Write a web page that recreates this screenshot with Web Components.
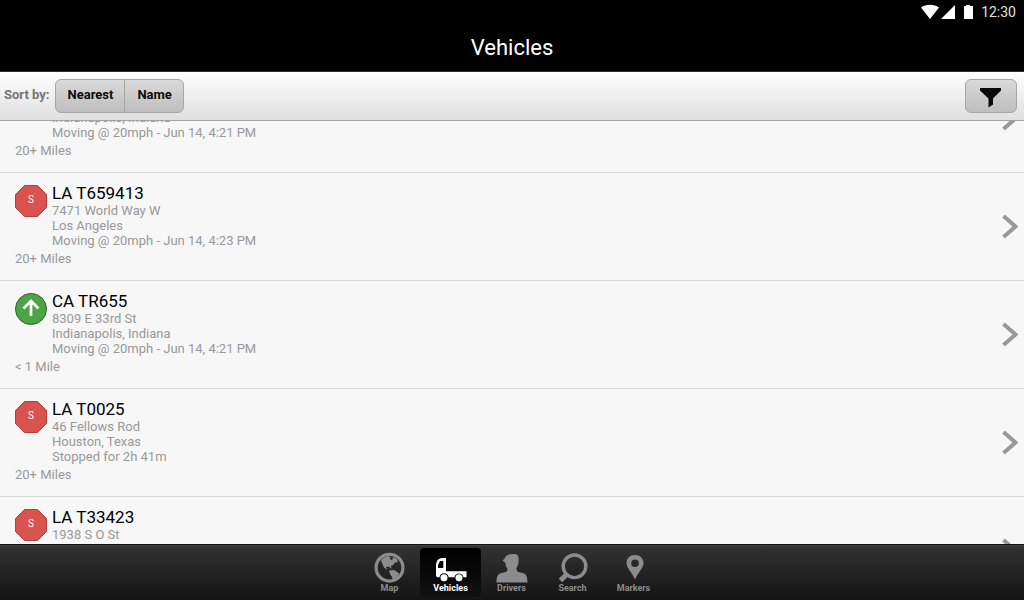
<!DOCTYPE html>
<html lang="en">
<head>
<meta charset="utf-8">
<meta name="viewport" content="width=device-width, initial-scale=1">
<title>Vehicles</title>
<style>
    html, body {
        height: 100%;
        margin: 0;
    }
    body {
        font-family: Roboto, "Liberation Sans", sans-serif;
        background: #000;
    }
</style>
</head>
<body>

<app-screen>
    <status-bar slot="top" time="12:30"></status-bar>
    <title-bar slot="top">Vehicles</title-bar>
    <sort-bar slot="top" label="Sort by:">
        <sort-button slot="options">Nearest</sort-button>
        <sort-button slot="options">Name</sort-button>
    </sort-bar>

    <vehicle-list offset="56">
        <vehicle-row city="Indianapolis, Indiana" status="Moving @ 20mph - Jun 14, 4:21 PM" distance="20+ Miles" state="moving"></vehicle-row>
        <vehicle-row name="LA T659413" street="7471 World Way W" city="Los Angeles" status="Moving @ 20mph - Jun 14, 4:23 PM" distance="20+ Miles" state="stopped"></vehicle-row>
        <vehicle-row name="CA TR655" street="8309 E 33rd St" city="Indianapolis, Indiana" status="Moving @ 20mph - Jun 14, 4:21 PM" distance="&lt; 1 Mile" state="moving"></vehicle-row>
        <vehicle-row name="LA T0025" street="46 Fellows Rod" city="Houston, Texas" status="Stopped for 2h 41m" distance="20+ Miles" state="stopped"></vehicle-row>
        <vehicle-row name="LA T33423" street="1938 S O St" state="stopped"></vehicle-row>
    </vehicle-list>

    <tab-bar slot="bottom">
        <tab-item icon="map">Map</tab-item>
        <tab-item icon="vehicles" active>Vehicles</tab-item>
        <tab-item icon="drivers">Drivers</tab-item>
        <tab-item icon="search">Search</tab-item>
        <tab-item icon="markers">Markers</tab-item>
    </tab-bar>
</app-screen>

<script>
// attaches an open shadow root with the given markup
function render(host, html) {
    const template = document.createElement('template')
    template.innerHTML = html
    host.attachShadow({ mode: 'open' }).appendChild(template.content.cloneNode(true))
    return host.shadowRoot
}

class AppScreen extends HTMLElement {
    constructor() {
        super()
        render(this, `
            <style>
                :host {
                    display: flex;
                    flex-direction: column;
                    height: 100vh;
                }
                main {
                    flex: 1;
                    min-height: 0;
                    display: flex;
                    flex-direction: column;
                }
            </style>
            <slot name="top"></slot>
            <main><slot></slot></main>
            <slot name="bottom"></slot>
        `)
    }
}

class StatusBar extends HTMLElement {
    constructor() {
        super()
        const root = render(this, `
            <style>
                :host {
                    display: flex;
                    justify-content: flex-end;
                    align-items: center;
                    height: 24px;
                    padding-right: 8px;
                    background: #000;
                    color: #e0e0e0;
                    font-size: 14px;
                }
                svg {
                    display: block;
                    fill: #fff;
                    margin-right: 8px;
                }
            </style>
            <svg width="52" height="16" viewBox="0 0 52 16" aria-hidden="true">
                <path d="M0 3.5C5-.2 13-.2 18 3.5L9 15Z"/>
                <path d="M34 1V15H20Z"/>
                <path d="M43 2h2V1h4v1h3v13h-9Z"/>
            </svg>
            <time></time>
        `)
        root.querySelector('time').textContent = this.getAttribute('time')
    }
}

class TitleBar extends HTMLElement {
    constructor() {
        super()
        render(this, `
            <style>
                :host {
                    display: block;
                    background: #000;
                    border-bottom: 1px solid #1b3446;
                }
                h1 {
                    margin: 0;
                    color: #fff;
                    font-size: 22px;
                    font-weight: 400;
                    line-height: 47px;
                    text-align: center;
                }
            </style>
            <h1><slot></slot></h1>
        `)
    }
}

class SortButton extends HTMLElement {
    constructor() {
        super()
        render(this, `
            <style>
                :host {
                    display: block;
                }
                :host(:not(:first-child)) {
                    border-left: 1px solid #a6a6a6;
                }
                button {
                    height: 32px;
                    margin: 0;
                    padding: 0 11px 4px 12px;
                    border: 0;
                    background: none;
                    color: #0a0a0a;
                    font: bold 13px Roboto, "Liberation Sans", sans-serif;
                    cursor: pointer;
                }
            </style>
            <button type="button"><slot></slot></button>
        `)
    }
}

class SortBar extends HTMLElement {
    constructor() {
        super()
        const root = render(this, `
            <style>
                :host {
                    display: flex;
                    align-items: center;
                    gap: 5px;
                    height: 48px;
                    padding: 0 7px 0 4px;
                    background: linear-gradient(#fff, #dfdfdf);
                    border-bottom: 1px solid #a4a4a4;
                }
                #label {
                    color: #757575;
                    font-size: 13px;
                    font-weight: bold;
                    padding-bottom: 4px;
                }
                .group, .filter {
                    box-sizing: border-box;
                    height: 34px;
                    border: 1px solid #a6a6a6;
                    border-radius: 6px;
                    background: linear-gradient(#d9d9d9, #bebebe);
                }
                .group {
                    display: flex;
                }
                .filter {
                    display: flex;
                    align-items: center;
                    justify-content: center;
                    width: 52px;
                    margin-left: auto;
                    padding: 4px 0 0;
                    cursor: pointer;
                }
            </style>
            <span id="label"></span>
            <div class="group" role="group" aria-labelledby="label"><slot name="options"></slot></div>
            <button class="filter" type="button" aria-label="Filter">
                <svg width="22" height="20" viewBox="0 0 22 20" aria-hidden="true">
                    <path d="M0 0H21V2.5L13 10.5V16.5L8.5 19.5V10.5L0 2.5Z" fill="#0a0a0a"/>
                </svg>
            </button>
        `)
        root.querySelector('#label').textContent = this.getAttribute('label')
    }
}

class VehicleList extends HTMLElement {
    constructor() {
        super()
        render(this, `
            <style>
                :host {
                    display: block;
                    flex: 1;
                    min-height: 0;
                    overflow-y: auto;
                    scrollbar-width: none;
                    background: #f7f7f7;
                }
            </style>
            <div role="list"><slot></slot></div>
        `)
    }
    connectedCallback() {
        this.scrollTop = Number(this.getAttribute('offset'))
    }
}

const badges = {
    stopped: `
        <path d="M9.5.5H22.5L31.5 9.5V22.5L22.5 31.5H9.5L.5 22.5V9.5Z" fill="#d9534f" stroke="#b83c38"/>
        <text x="16" y="18" fill="#fff" font-size="10" text-anchor="middle">S</text>`,
    moving: `
        <circle cx="16" cy="16" r="15.5" fill="#4ca446" stroke="#2c6329"/>
        <path d="M16 23V9M8.5 15.5L16 8L23.5 15.5" fill="none" stroke="#fff" stroke-width="2.7"/>`
}

class VehicleRow extends HTMLElement {
    constructor() {
        super()
        const root = render(this, `
            <style>
                :host {
                    display: block;
                    border-bottom: 1px solid #d9d9d9;
                }
                a {
                    display: flex;
                    align-items: center;
                    justify-content: space-between;
                    padding: 12px 6px 14px 15px;
                    color: #999;
                    font-size: 13px;
                    line-height: 15px;
                    text-decoration: none;
                }
                .info {
                    display: grid;
                    grid-template-columns: 32px auto;
                    column-gap: 5px;
                }
                svg {
                    display: block;
                }
                h2 {
                    margin: 0;
                    min-height: 16px;
                    padding-bottom: 2px;
                    color: #000;
                    font-size: 17px;
                    font-weight: 400;
                    line-height: 16px;
                }
                p {
                    margin: 0;
                    min-height: 15px;
                }
                .distance {
                    grid-column: 1 / -1;
                    margin-top: 3px;
                }
            </style>
            <a href="#">
                <div class="info">
                    <svg width="32" height="32" viewBox="0 0 32 32" aria-hidden="true">${badges[this.getAttribute('state')]}</svg>
                    <div>
                        <h2></h2>
                        <p class="street"></p>
                        <p class="city"></p>
                        <p class="status"></p>
                    </div>
                    <p class="distance"></p>
                </div>
                <svg width="17" height="26" viewBox="0 0 17 26" aria-hidden="true">
                    <path d="M2.5 3L14.5 13.5L2.5 24" fill="none" stroke="#999" stroke-width="4"/>
                </svg>
            </a>
        `)
        this.setAttribute('role', 'listitem')
        root.querySelector('h2').textContent = this.getAttribute('name')
        for (const field of ['street', 'city', 'status', 'distance']) {
            root.querySelector('.' + field).textContent = this.getAttribute(field)
        }
    }
}

class TabBar extends HTMLElement {
    constructor() {
        super()
        render(this, `
            <style>
                :host {
                    display: block;
                    border-top: 1px solid #111;
                    background: linear-gradient(#333, #141414);
                }
                nav {
                    display: flex;
                    justify-content: center;
                    padding: 2px 1px 3px 0;
                    border-top: 1px solid #444;
                }
            </style>
            <nav><slot></slot></nav>
        `)
    }
}

const icons = {
    map: `
        <circle cx="15.5" cy="15.7" r="13.4" fill="none" stroke="currentColor" stroke-width="3.2"/>
        <path d="M7 8L11 5L14 4L17 5.5L15.5 7L18 8L19.5 5L23 7L24 10L21 10.5L19 13L17 14L17.5 17L15 14.5L12 15L13.5 18L10 15.5L8 11Z"/>
        <path d="M15 18.5L20 18L25.5 21.5L23 25L19 29L18 25L16 22Z"/>`,
    vehicles: `
        <path fill-rule="evenodd" d="M5 6.6L6.5 6H11V19.3H31.5V25.2H28.5A4.6 4.6 0 0 0 19.5 25.2H13.6A4.6 4.6 0 0 0 4.5 25.2H2.2L1 24V12L2.5 8ZM5 9L3 13V16H8.3V9Z"/>
        <circle cx="9" cy="25.7" r="3.5"/>
        <circle cx="24" cy="25.7" r="3.5"/>`,
    drivers: `
        <path d="M6.5 8.5L9 6C10 3 13 2 17 2C22 2 23 4 22.5 8C23 12 21.5 14 20.5 16C20 20 23 20.5 27 21C30 22 31.5 24 31.5 30.5H.5C.5 24 2 22 5 21C9 20.5 12 20 11.5 17C10 15 9.5 13 9.5 11Z"/>`,
    search: `
        <circle cx="17.5" cy="14.3" r="11.3" fill="none" stroke="currentColor" stroke-width="3.4"/>
        <path d="M9.5 22.5L3.5 28.5" fill="none" stroke="currentColor" stroke-width="5"/>`,
    markers: `
        <path fill-rule="evenodd" d="M17 3C22 3 25.5 6.5 25.5 11C25.5 16 20 20.5 17 27.5C14 20.5 8.5 16 8.5 11C8.5 6.5 12 3 17 3ZM17 7.5A3.8 3.8 0 0 0 17 15.1A3.8 3.8 0 0 0 17 7.5Z"/>`
}

class TabItem extends HTMLElement {
    constructor() {
        super()
        render(this, `
            <style>
                :host {
                    display: block;
                    width: 61px;
                    border-radius: 4px;
                    color: #8c8c8c;
                }
                :host([active]) {
                    background: linear-gradient(#000, #111);
                    color: #fff;
                }
                a {
                    display: flex;
                    flex-direction: column;
                    align-items: center;
                    padding: 4px 0;
                    color: inherit;
                    font-size: 9px;
                    font-weight: bold;
                    line-height: 10px;
                    text-decoration: none;
                }
                svg {
                    display: block;
                    fill: currentColor;
                }
            </style>
            <a href="#">
                <svg width="32" height="31" viewBox="0 0 32 31" aria-hidden="true">${icons[this.getAttribute('icon')]}</svg>
                <slot></slot>
            </a>
        `)
        if (this.hasAttribute('active')) {
            this.shadowRoot.querySelector('a').setAttribute('aria-current', 'page')
        }
    }
}

window.customElements.define('app-screen', AppScreen)
window.customElements.define('status-bar', StatusBar)
window.customElements.define('title-bar', TitleBar)
window.customElements.define('sort-button', SortButton)
window.customElements.define('sort-bar', SortBar)
window.customElements.define('vehicle-row', VehicleRow)
window.customElements.define('tab-item', TabItem)
window.customElements.define('tab-bar', TabBar)
// last, so the rows already have their height when it scrolls
window.customElements.define('vehicle-list', VehicleList)
</script>
</body>
</html>
